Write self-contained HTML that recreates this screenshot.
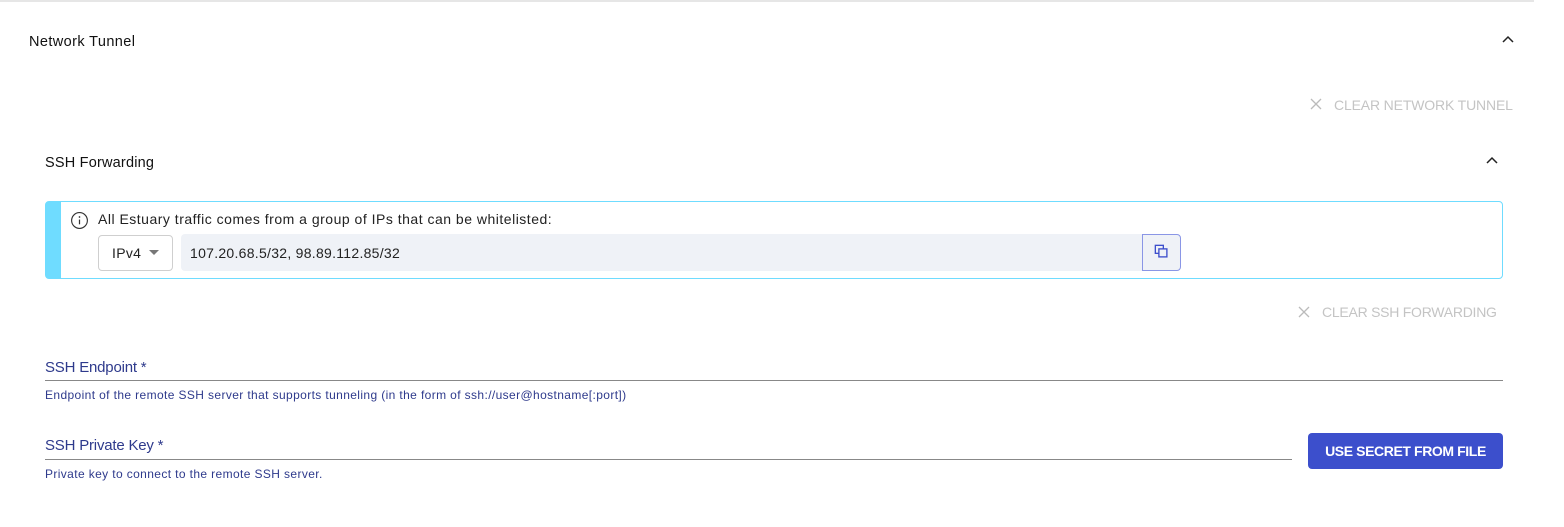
<!DOCTYPE html>
<html><head><meta charset="utf-8"><style>
*{box-sizing:border-box;margin:0;padding:0}
body{width:1564px;height:527px;background:#fff;font-family:"Liberation Sans",sans-serif;position:relative;overflow:hidden;color:#111}
.a{position:absolute;white-space:nowrap}
.clear{color:#c4c4c4;font-size:14px;letter-spacing:-0.15px}
.lbl{color:#2e3a8c;font-size:15px;letter-spacing:-0.2px}
.help{color:#2e3a8c;font-size:12px;letter-spacing:0.38px}
</style></head><body>
<div class="a" style="left:0;top:0;width:1534px;height:2px;background:#e6e6e6"></div>
<div class="a" style="left:29px;top:34px;font-size:14.5px;letter-spacing:0.4px;color:#111">Network Tunnel</div>
<svg class="a" style="left:1501px;top:35px" width="14" height="10" viewBox="0 0 14 10"><path d="M2 7L7 2L12 7" fill="none" stroke="#222" stroke-width="1.5"/></svg>
<svg class="a" style="left:1310px;top:98px" width="12" height="12" viewBox="0 0 12 12"><path d="M1 1L11 11M11 1L1 11" stroke="#bbb" stroke-width="1.3"/></svg>
<div class="a clear" style="left:1334px;top:97px">CLEAR NETWORK TUNNEL</div>
<div class="a" style="left:45px;top:155px;font-size:14.5px;letter-spacing:0.2px;color:#111">SSH Forwarding</div>
<svg class="a" style="left:1485px;top:156px" width="14" height="10" viewBox="0 0 14 10"><path d="M2 7L7 2L12 7" fill="none" stroke="#222" stroke-width="1.5"/></svg>
<div class="a" style="left:45px;top:201px;width:1458px;height:78px;border:1px solid #6fdcff;border-radius:4px;border-left:16px solid #6fdcff"></div>
<svg class="a" style="left:70px;top:211px" width="19" height="19" viewBox="0 0 20 20"><circle cx="10" cy="10" r="8.3" fill="none" stroke="#333" stroke-width="1.2"/><path d="M10 9v5" stroke="#333" stroke-width="1.3"/><circle cx="10" cy="6.3" r="0.9" fill="#333"/></svg>
<div class="a" style="left:98px;top:211px;font-size:14px;letter-spacing:0.5px;color:#222">All Estuary traffic comes from a group of IPs that can be whitelisted:</div>
<div class="a" style="left:98px;top:235px;width:75px;height:36px;border:1px solid #cfcfcf;border-radius:4px"></div>
<div class="a" style="left:112px;top:245px;font-size:14px;letter-spacing:0.3px;color:#222">IPv4</div>
<svg class="a" style="left:148px;top:250px" width="12" height="6" viewBox="0 0 12 6"><path d="M1 0L11 0L6 5Z" fill="#777"/></svg>
<div class="a" style="left:181px;top:234px;width:962px;height:37px;background:#eff2f7;border-radius:4px 0 0 4px"></div>
<div class="a" style="left:190px;top:245px;font-size:14px;letter-spacing:0.28px;color:#222">107.20.68.5/32, 98.89.112.85/32</div>
<div class="a" style="left:1142px;top:234px;width:39px;height:37px;background:#eff2f7;border:1px solid #8a96e6;border-radius:0 4px 4px 0"></div>
<svg class="a" style="left:1154px;top:244px" width="16" height="16" viewBox="0 0 18 18"><rect x="1.5" y="1.5" width="9" height="9" fill="none" stroke="#3d4fcc" stroke-width="1.5"/><rect x="5.5" y="5.5" width="9" height="9" fill="#eff2f7" stroke="#3d4fcc" stroke-width="1.5"/></svg>
<svg class="a" style="left:1298px;top:306px" width="12" height="12" viewBox="0 0 12 12"><path d="M1 1L11 11M11 1L1 11" stroke="#bbb" stroke-width="1.3"/></svg>
<div class="a clear" style="left:1322px;top:304px;letter-spacing:-0.25px">CLEAR SSH FORWARDING</div>
<div class="a lbl" style="left:45px;top:359px">SSH Endpoint *</div>
<div class="a" style="left:45px;top:380px;width:1458px;height:1px;background:#888"></div>
<div class="a help" style="left:45px;top:388px">Endpoint of the remote SSH server that supports tunneling (in the form of ssh://user@hostname[:port])</div>
<div class="a lbl" style="left:45px;top:437px">SSH Private Key *</div>
<div class="a" style="left:45px;top:459px;width:1247px;height:1px;background:#888"></div>
<div class="a help" style="left:45px;top:467px">Private key to connect to the remote SSH server.</div>
<div class="a" style="left:1308px;top:433px;width:195px;height:36px;background:#3c4fcc;border-radius:4px;color:#fff;font-size:14px;font-weight:bold;letter-spacing:-0.4px;text-align:center;line-height:36px">USE SECRET FROM FILE</div>
</body></html>
